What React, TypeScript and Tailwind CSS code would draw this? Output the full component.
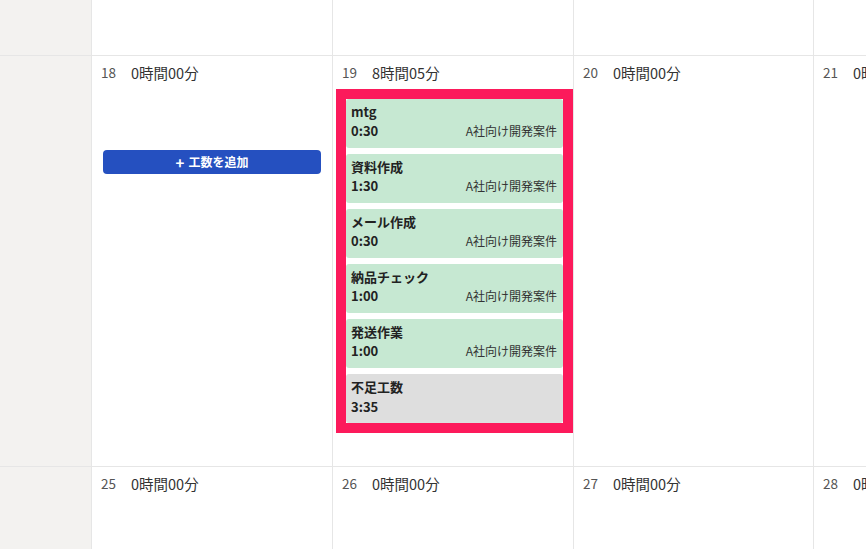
const entries = [
  { title: 'mtg', time: '0:30', project: 'A社向け開発案件' },
  { title: '資料作成', time: '1:30', project: 'A社向け開発案件' },
  { title: 'メール作成', time: '0:30', project: 'A社向け開発案件' },
  { title: '納品チェック', time: '1:00', project: 'A社向け開発案件' },
  { title: '発送作業', time: '1:00', project: 'A社向け開発案件' },
]

function DayHeader({ day, total }: { day: number; total: string }) {
  return (
    <div className="h-[33px] flex items-center pl-[9px] gap-[15px] whitespace-nowrap">
      <span className="text-[13.5px] text-[#555]">{day}</span>
      <span className="text-[14.5px] text-[#333]">{total}</span>
    </div>
  )
}

function Cell({ children, last }: { children?: React.ReactNode; last?: boolean }) {
  return <div className={`border-b border-[#e6e6e6] ${last ? '' : 'border-r'} overflow-hidden`}>{children}</div>
}

export default function App() {
  return (
    <div
      className="w-[866px] h-[549px] overflow-hidden bg-white"
      style={{ fontFamily: '"Noto Sans CJK JP", "Noto Sans", sans-serif' }}
    >
      <div className="grid grid-cols-[92px_241px_241px_240px_241px] grid-rows-[56px_411px_120px]">
        {/* top row */}
        <div className="bg-[#f3f2f0] border-r border-b border-[#e6e6e6]" />
        <Cell />
        <Cell />
        <Cell />
        <Cell last />

        {/* middle row */}
        <div className="bg-[#f3f2f0] border-r border-b border-[#e6e6e6]" />
        <Cell>
          <DayHeader day={18} total="0時間00分" />
          <div className="px-[11px] mt-[61px]">
            <button className="w-full h-[24px] rounded-[4px] bg-[#2550c0] text-white text-[12px] font-bold flex items-center justify-center gap-[4px]">
              <span className="text-[15px] leading-none font-bold">+</span>
              <span>工数を追加</span>
            </button>
          </div>
        </Cell>
        <Cell>
          <DayHeader day={19} total="8時間05分" />
          <div className="ml-[3px] border-[10px] border-[#fc1a5b] bg-white flex flex-col gap-[6px]">
            {entries.map((e) => (
              <div key={e.title} className="h-[49px] rounded-[3px] bg-[#c6e8d2] pl-[5px] pr-[6px] pt-[4px] text-[#222]">
                <div className="text-[13px] font-bold leading-[18px]">{e.title}</div>
                <div className="flex justify-between items-center leading-[18px] mt-[1px]">
                  <span className="text-[13px] font-bold">{e.time}</span>
                  <span className="text-[12px] text-[#333]">{e.project}</span>
                </div>
              </div>
            ))}
            <div className="h-[49px] rounded-[3px] bg-[#dedede] pl-[5px] pr-[6px] pt-[4px] text-[#222]">
              <div className="text-[13px] font-bold leading-[18px]">不足工数</div>
              <div className="text-[13px] font-bold leading-[18px] mt-[2px]">3:35</div>
            </div>
          </div>
        </Cell>
        <Cell>
          <DayHeader day={20} total="0時間00分" />
        </Cell>
        <Cell last>
          <DayHeader day={21} total="0時間00分" />
        </Cell>

        {/* bottom row */}
        <div className="bg-[#f3f2f0] border-r border-[#e6e6e6]" />
        <div className="border-r border-[#e6e6e6]">
          <DayHeader day={25} total="0時間00分" />
        </div>
        <div className="border-r border-[#e6e6e6]">
          <DayHeader day={26} total="0時間00分" />
        </div>
        <div className="border-r border-[#e6e6e6]">
          <DayHeader day={27} total="0時間00分" />
        </div>
        <div className="overflow-hidden">
          <DayHeader day={28} total="0時間00分" />
        </div>
      </div>
    </div>
  )
}
